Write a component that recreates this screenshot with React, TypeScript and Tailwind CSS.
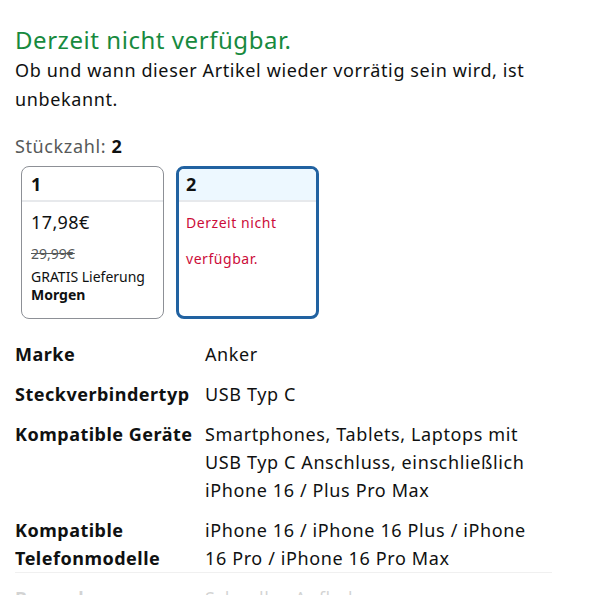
import React from "react";

const SPECS = [
  { label: ["Marke"], value: "Anker" },
  { label: ["Steckverbindertyp"], value: "USB Typ C" },
  {
    label: ["Kompatible Geräte"],
    value: "Smartphones, Tablets, Laptops mit USB Typ C Anschluss, einschließlich iPhone 16 / Plus Pro Max",
  },
  {
    label: ["Kompatible", "Telefonmodelle"],
    value: "iPhone 16 / iPhone 16 Plus / iPhone 16 Pro / iPhone 16 Pro Max",
  },
  { label: ["Besonderes"], value: "Schnelles Aufladen" },
];

export default function App() {
  return (
    <div className="h-[595px] w-[590px] overflow-hidden bg-white pl-[15px] pt-[24px] font-['Noto_Sans',Arial,sans-serif] tracking-[0.62px] text-[#0f1111]">
      <h1 className="text-[24px] leading-[32px] tracking-[0.55px] text-[#178a3e]">Derzeit nicht verfügbar.</h1>
      <p className="w-[540px] text-[18px] leading-[29px]">
        Ob und wann dieser Artikel wieder vorrätig sein wird, ist unbekannt.
      </p>

      <p className="mt-[20px] text-[18px] leading-[24px] text-[#565959]">
        Stückzahl: <span className="font-bold text-[#0f1111]">2</span>
      </p>

      <div className="mt-[8px] ml-[6px] flex gap-[12px]">
        <div className="flex h-[153px] w-[143px] flex-col overflow-hidden rounded-[8px] border border-[#8d9096]">
          <div className="h-[35px] border-b-2 border-[#e7e9ec] pl-[9px] pt-[5px] text-[18px] font-bold leading-[24px]">1</div>
          <div className="pl-[9px] pt-[8px]">
            <div className="text-[18px] leading-[24px] tracking-[0.4px]">17,98€</div>
            <div className="mt-[11px] text-[14px] leading-[18px] tracking-normal text-[#565959] line-through">29,99€</div>
            <div className="mt-[5px] text-[14px] leading-[18px] tracking-normal">GRATIS Lieferung</div>
            <div className="text-[14px] font-bold leading-[18px] tracking-normal">Morgen</div>
          </div>
        </div>
        <div className="flex h-[153px] w-[143px] flex-col overflow-hidden rounded-[8px] border-[3px] border-[#2162a1]">
          <div className="h-[33px] border-b-2 border-[#e7e9ec] bg-[#edf8ff] pl-[7px] pt-[3px] text-[18px] font-bold leading-[24px]">2</div>
          <div className="pl-[7px] pt-[3px] text-[14px] leading-[36px] tracking-[0.55px] text-[#cc0c39]">
            Derzeit nicht verfügbar.
          </div>
        </div>
      </div>

      <div className="relative mt-[21px] w-[537px]">
        {SPECS.map((row) => (
          <div key={row.value} className="flex pb-[12px] text-[18px] leading-[28px]">
            <div className="w-[190px] shrink-0 font-bold tracking-[0.5px]">
              {row.label.map((l) => (
                <div key={l}>{l}</div>
              ))}
            </div>
            <div className="w-[340px]">{row.value}</div>
          </div>
        ))}
        <div className="absolute left-0 right-0 top-[232px] h-[60px] border-t border-[#f0f0f0] bg-gradient-to-b from-white/85 to-white/75" />
      </div>
    </div>
  );
}
